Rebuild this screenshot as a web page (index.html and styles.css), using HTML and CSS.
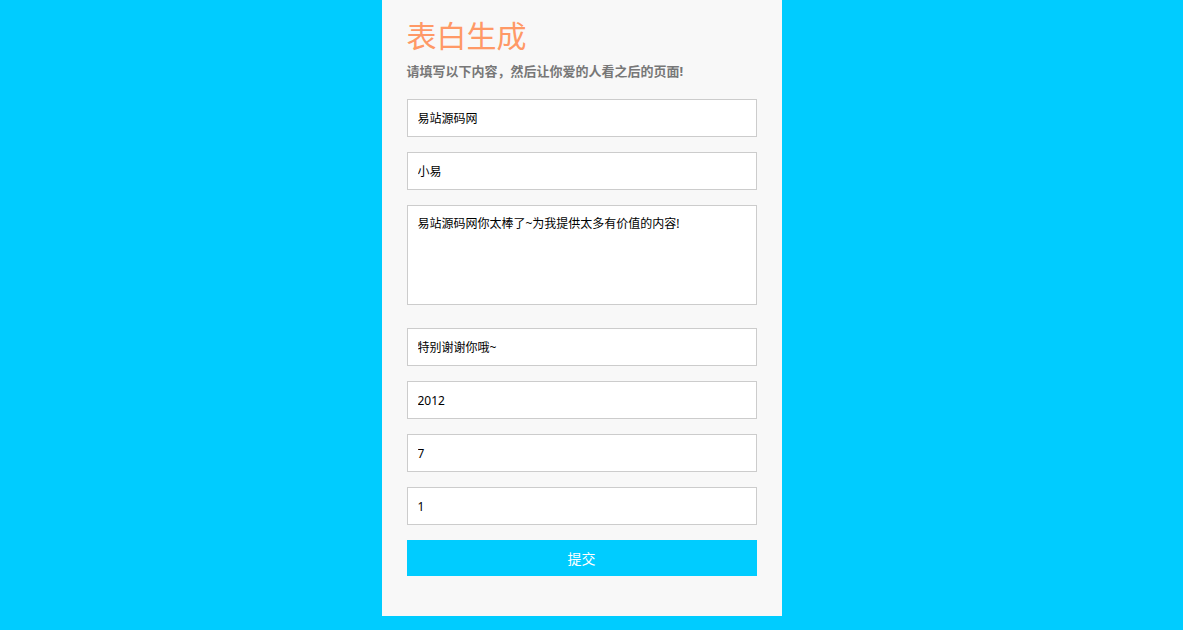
FILE: index.html
```html
<!DOCTYPE html>
<html lang="zh-CN">
<head>
<meta charset="utf-8">
<title>表白生成</title>
<link rel="stylesheet" href="styles.css">
</head>
<body>
<div class="panel">
  <h1 class="title">表白生成</h1>
  <p class="subtitle">请填写以下内容，然后让你爱的人看之后的页面!</p>
  <form class="form">
    <input class="field" type="text" value="易站源码网">
    <input class="field" type="text" value="小易">
    <textarea class="field area">易站源码网你太棒了~为我提供太多有价值的内容!</textarea>
    <input class="field" type="text" value="特别谢谢你哦~">
    <input class="field" type="text" value="2012">
    <input class="field" type="text" value="7">
    <input class="field" type="text" value="1">
    <button class="submit" type="button">提交</button>
  </form>
</div>
</body>
</html>
```
FILE: styles.css
```css
html, body {
  margin: 0;
  padding: 0;
}
body {
  background: #00ccff;
  font-family: "Noto Sans", "Noto Sans CJK SC", sans-serif;
  min-height: 630px;
}
.panel {
  width: 350px;
  margin-left: calc(50% - 210px);
  padding: 14px 25px 40px;
  background: #f8f8f8;
}
.title {
  margin: 0;
  font-size: 30px;
  line-height: 44px;
  font-weight: normal;
  color: #ff9966;
}
.subtitle {
  margin: 3px 0 0;
  font-size: 13px;
  line-height: 20px;
  font-weight: bold;
  color: #777777;
}
.form {
  display: flex;
  flex-direction: column;
  margin-top: 18px;
}
.field {
  box-sizing: border-box;
  width: 350px;
  height: 38px;
  margin: 0 0 15px;
  padding: 0 10px;
  border: 1px solid #cccccc;
  border-radius: 0;
  background: #ffffff;
  color: #000000;
  font-family: "Noto Sans", "Noto Sans CJK SC", sans-serif;
  font-size: 12px;
  outline: none;
}
.area {
  height: 100px;
  margin-bottom: 23px;
  padding: 9px 10px;
  line-height: 17px;
  resize: none;
}
.submit {
  width: 350px;
  height: 36px;
  margin: 0;
  padding: 0;
  border: none;
  background: #00ccff;
  color: #ffffff;
  font-family: "Noto Sans", "Noto Sans CJK SC", sans-serif;
  font-size: 14px;
}
```
